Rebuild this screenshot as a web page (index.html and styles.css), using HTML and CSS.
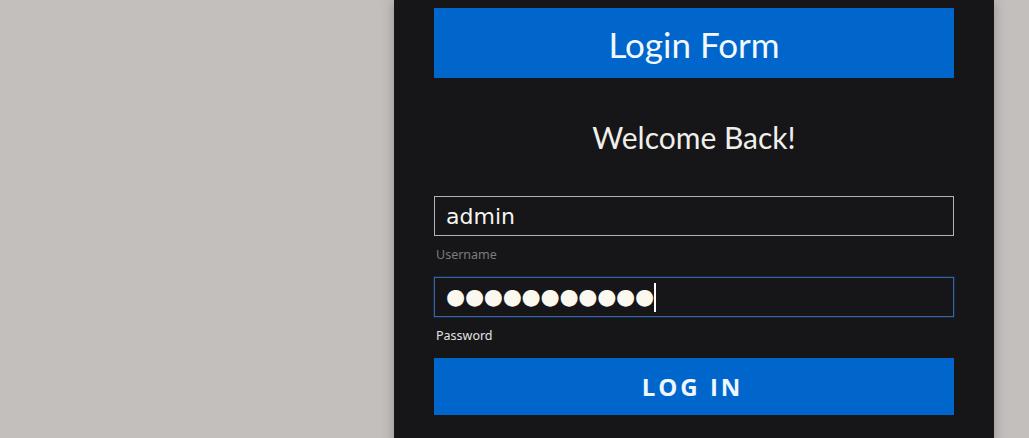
FILE: index.html
```html
<!DOCTYPE html>
<html lang="en">
<head>
<meta charset="utf-8">
<title>Login Form</title>
<link rel="stylesheet" href="styles.css">
</head>
<body>
<div class="page">
  <div class="panel">
    <h1 class="header">Login Form</h1>
    <h2 class="welcome">Welcome Back!</h2>
    <form class="form">
      <div class="field">
        <input class="input" type="text" value="admin">
        <label class="label label-muted">Username</label>
      </div>
      <div class="field">
        <div class="input input-focus"><span class="dots">●●●●●●●●●●●</span><span class="caret"></span></div>
        <label class="label">Password</label>
      </div>
      <button class="button" type="button">LOG IN</button>
    </form>
  </div>
</div>
</body>
</html>
```
FILE: styles.css
```css
html, body {
  margin: 0;
  padding: 0;
  height: 100%;
  overflow: hidden;
  background: #c3bfbc;
}
.page {
  display: flex;
  justify-content: flex-start;
  padding-left: 394px;
  width: 1029px;
  box-sizing: border-box;
}
.panel {
  width: 600px;
  flex: none;
  background: #161618;
  box-shadow: 0 0 12px rgba(0, 0, 0, 0.25);
  padding: 8px 40px 60px;
  box-sizing: border-box;
  min-height: 520px;
  font-family: "Lato", "Open Sans", sans-serif;
}
.header {
  margin: 0;
  height: 70px;
  background: #0066cb;
  color: #f2f8ff;
  font-weight: 400;
  font-size: 35px;
  line-height: 72px;
  text-align: center;
}
.welcome {
  margin: 39px 0 0;
  color: #f0efea;
  font-weight: 400;
  font-size: 30px;
  line-height: 40px;
  text-align: center;
}
.form {
  display: flex;
  flex-direction: column;
  margin-top: 39px;
}
.field {
  display: flex;
  flex-direction: column;
}
.input {
  box-sizing: border-box;
  width: 520px;
  height: 40px;
  margin: 0;
  padding: 0 11px;
  background: #161618;
  border: 1px solid #b3b3b3;
  color: #f4f4f4;
  font-family: "DejaVu Sans", sans-serif;
  font-size: 22px;
  outline: none;
}
.input-focus {
  display: flex;
  align-items: center;
  border-color: #3b64a0;
  box-shadow: 0 0 0 1px rgba(20, 60, 120, 0.45);
}
.dots {
  color: #fbf8f0;
  font-family: "DejaVu Sans", sans-serif;
  font-size: 22px;
  letter-spacing: -0.3px;
  line-height: 1;
}
.caret {
  width: 2px;
  height: 29px;
  margin-left: 0;
  background: #ffffff;
}
.label {
  height: 41px;
  padding: 10px 0 0 2px;
  box-sizing: border-box;
  color: #e2e2e2;
  font-family: "Noto Sans", "Open Sans", sans-serif;
  font-size: 12.5px;
  line-height: 18px;
}
.label-muted {
  color: #7c7c7c;
}
.button {
  width: 520px;
  height: 57px;
  margin: 0;
  border: none;
  background: #0066cb;
  color: #eef7ff;
  font-family: "Open Sans", sans-serif;
  font-weight: 700;
  font-size: 24px;
  letter-spacing: 3px;
  padding-left: 3px;
  cursor: pointer;
}
```
